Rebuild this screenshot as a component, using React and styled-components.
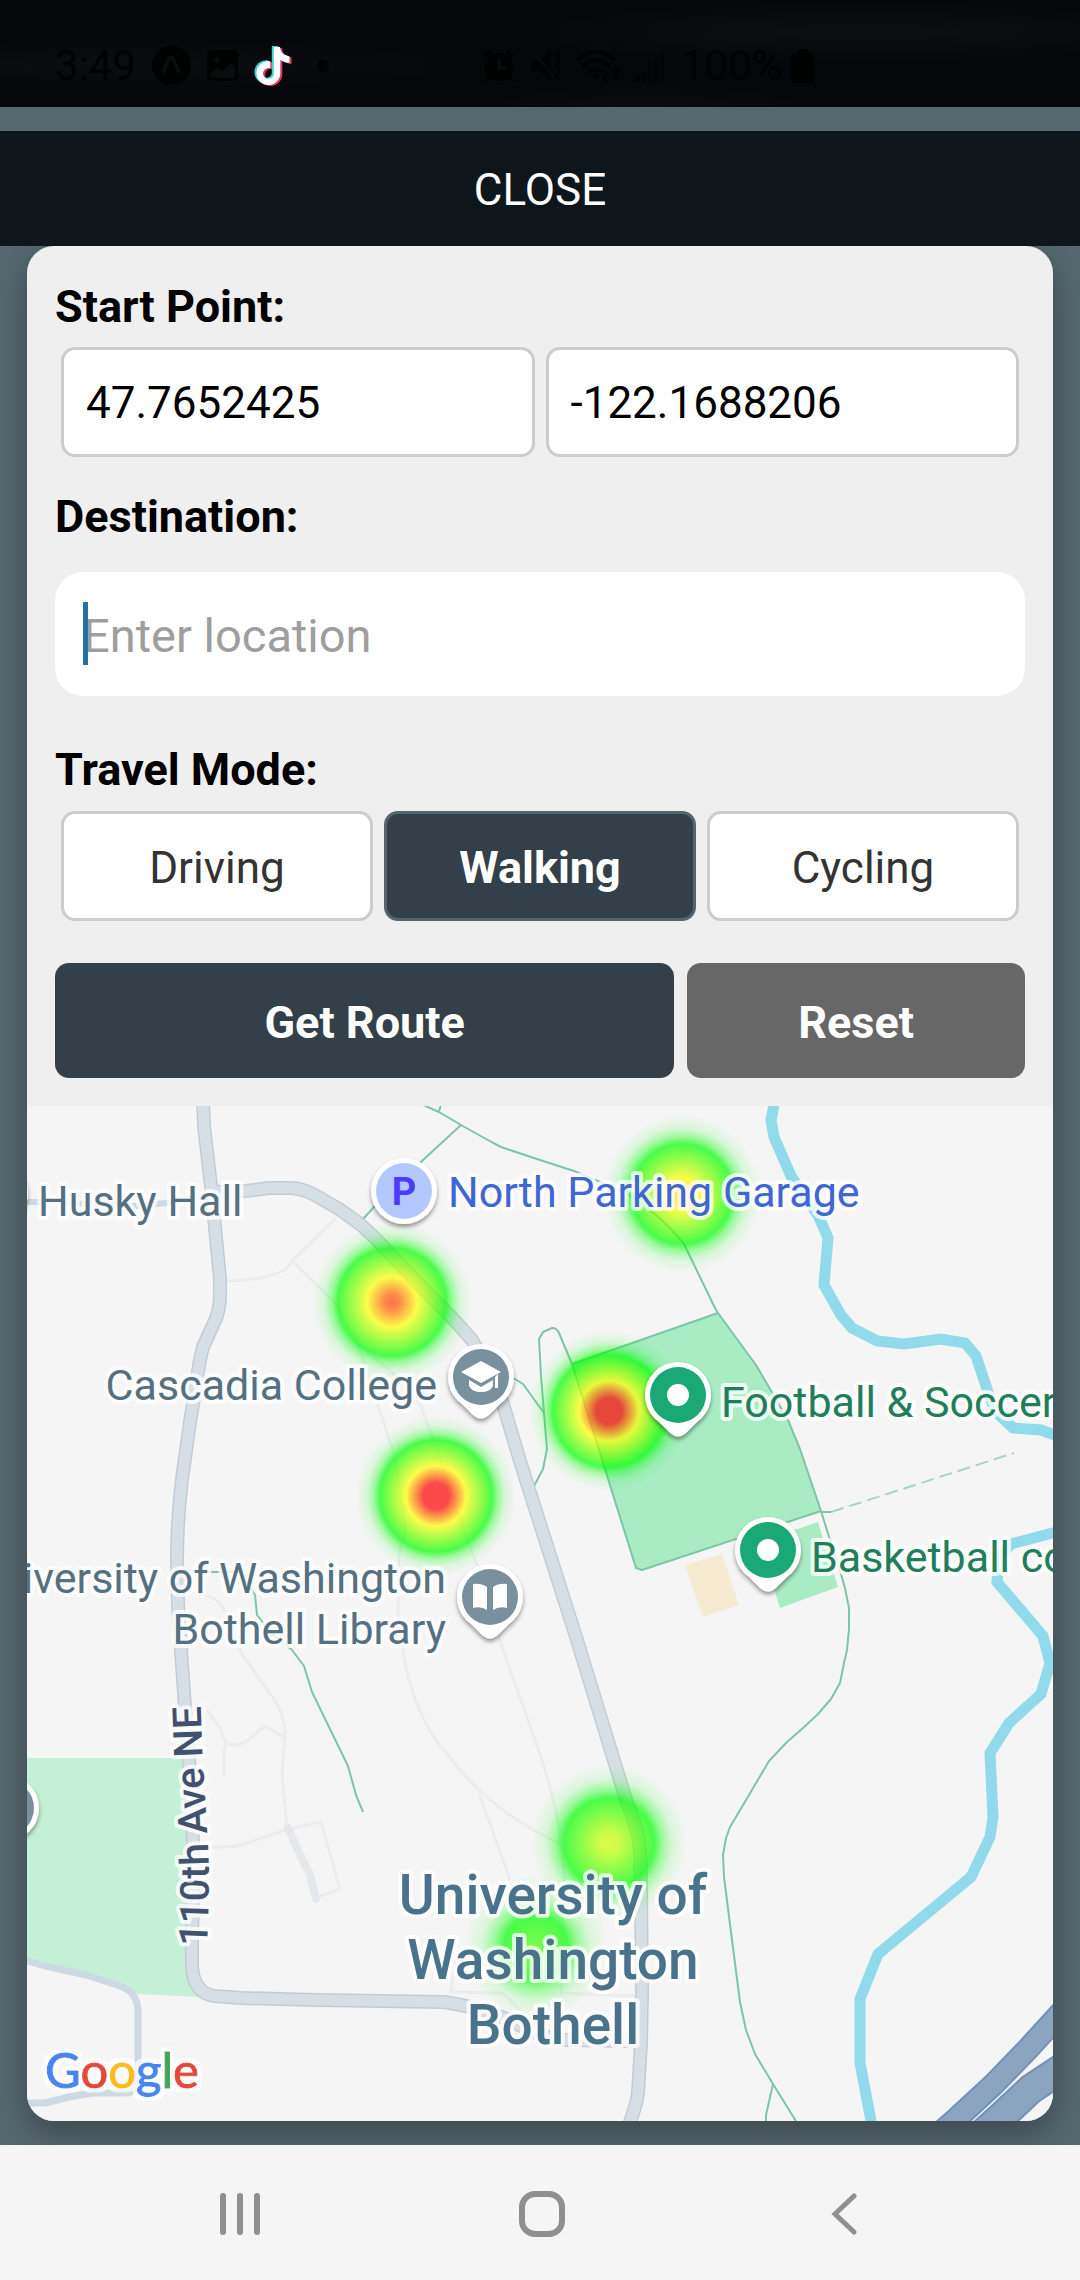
import React, { useState } from 'react'
import styled, { createGlobalStyle } from 'styled-components'
import { SiTiktok } from 'react-icons/si'

const GlobalStyle = createGlobalStyle`
  * {
    box-sizing: border-box;
  }
  body {
    margin: 0;
    background: #56676f;
    font-family: Roboto, 'Liberation Sans', sans-serif;
  }
  button, input {
    font-family: inherit;
  }
`

const Screen = styled.div`
  min-height: 100vh;
  display: flex;
  flex-direction: column;
  background: #56676f;
`

const StatusBar = styled.header`
  height: 107px;
  padding: 24px 55px 0;
  display: flex;
  align-items: center;
  background:
    radial-gradient(ellipse at 10% 60%, #0c0d0f, transparent 30%),
    radial-gradient(ellipse at 80% 30%, #0e0f12, transparent 30%),
    radial-gradient(ellipse at 60% 110%, #0d0e11, transparent 22%),
    #06070a;
  color: #010202;
  font-size: 42px;
`

const StatusGroup = styled.div`
  display: flex;
  align-items: center;
  gap: ${props => props.$gap}px;
  margin-left: ${props => props.$offset || 0}px;

  svg {
    display: block;
    flex: none;
  }
`

const Battery = styled.span`
  display: flex;
  align-items: center;
  gap: 8px;
`

const TikTok = styled(SiTiktok)`
  color: #ffffff;
  filter: drop-shadow(-2px -1px 0 #3fd5d8) drop-shadow(2px 1px 0 #e03a5c);
`

const CloseButton = styled.button`
  margin-top: 24px;
  height: 115px;
  width: 100%;
  padding: 3px 0 0;
  border: 0;
  background: #0e161b;
  color: #ffffff;
  font-size: 44px;
  text-transform: uppercase;
`

const Panel = styled.main`
  flex: 1;
  display: flex;
  flex-direction: column;
  margin: 0 27px 24px;
  border-radius: 27px;
  background: #efefef;
  overflow: hidden;
  box-shadow: 0 12px 32px rgba(0, 0, 0, 0.3);
  clip-path: inset(0 -27px -24px -27px);
`

const Form = styled.form`
  display: flex;
  flex-direction: column;
  padding: 34px 28px 28px;
`

const Label = styled.label`
  font-size: 45px;
  font-weight: bold;
  line-height: 53px;
  color: #000000;
  margin-bottom: ${props => props.$gap}px;
`

const Row = styled.div`
  display: flex;
  gap: 11px;
  padding: 0 6px;
  margin-bottom: ${props => props.$after}px;
`

const CoordInput = styled.input`
  flex: 1;
  min-width: 0;
  height: 110px;
  padding: 2px 22px 0;
  border: 3px solid #cccccc;
  border-radius: 14px;
  background: #ffffff;
  color: #000000;
  font-size: 44px;
`

const SearchBox = styled.div`
  position: relative;
  margin-bottom: 47px;
`

const SearchInput = styled.input`
  display: block;
  width: 100%;
  height: 124px;
  padding: 2px 28px 0;
  border: 0;
  border-radius: 28px;
  background: #ffffff;
  font-size: 47px;
  caret-color: #2471a3;

  &::placeholder {
    color: #9e9e9e;
    opacity: 1;
  }
`

const Caret = styled.span`
  position: absolute;
  left: 28px;
  top: 30px;
  width: 5px;
  height: 63px;
  background: #2471a3;
`

const ModeButton = styled.button`
  flex: 1;
  height: 110px;
  padding: 3px 0 0;
  border: 3px solid ${props => (props.$active ? '#54656e' : '#cccccc')};
  border-radius: 14px;
  background: ${props => (props.$active ? '#334049' : '#ffffff')};
  color: ${props => (props.$active ? '#ffffff' : '#333333')};
  font-size: ${props => (props.$active ? 45 : 44)}px;
  font-weight: ${props => (props.$active ? 'bold' : 'normal')};
`

const Actions = styled.div`
  display: grid;
  grid-template-columns: 11fr 6fr;
  gap: 13px;
`

const ActionButton = styled.button`
  height: 115px;
  padding: 3px 0 0;
  border: 0;
  border-radius: 14px;
  background: ${props => (props.$muted ? '#676767' : '#334049')};
  color: #ffffff;
  font-size: 45px;
  font-weight: bold;
`

const MapArea = styled.section`
  position: relative;
  flex: 1;
  min-height: 400px;
  background: #f6f5f6;
`

const MapSvg = styled.svg`
  position: absolute;
  inset: 0;
  width: 100%;
  height: 100%;
`

const MapLabel = styled.text`
  font-family: Roboto, 'Liberation Sans', sans-serif;
  font-size: ${props => props.$size || 43}px;
  font-weight: ${props => props.$weight || 400};
  fill: ${props => props.$color || '#557080'};
  stroke: #ffffff;
  stroke-opacity: 0.8;
  stroke-width: 8px;
  stroke-linejoin: round;
  paint-order: stroke;
`

const LogoText = styled.text`
  font-family: Lato, 'Open Sans', sans-serif;
  font-size: 49px;
  font-weight: 400;
  stroke-width: 1px;
`

const NavBar = styled.nav`
  height: 135px;
  display: flex;
  align-items: center;
  padding: 2px 85px 0 89px;
  background: #f5f5f5;
`

const NavButton = styled.button`
  flex: 1;
  display: flex;
  justify-content: center;
  padding: 0;
  border: 0;
  background: none;
`

const line = pts => 'M' + pts.join(' L')

const PATHS = {
  avenue: 'M203 1100 L204 1126 L211 1186 L220 1279 L220 1295 Q220 1312 213 1325 L203 1347 Q199 1362 196 1386 L190 1422 L182 1479 Q177 1520 177 1561 L178 1604 L181 1650 L185 1707 L190 1773 L193 1840 L193 1893 L192 1940 L192 1967 Q194 1993 214 1996 L241 1998 L317 2000 L444 2002 Q480 2007 516 2023 Q540 2038 566 2040 L634 2041',
  campusWay: 'M214 1192 L246 1191 L269 1188 L292 1188 Q303 1189 313 1194 L339 1209 L360 1224 L375 1238 L413 1278 L456 1322 L472 1340 Q490 1370 503 1404 L520 1461 L577 1640 L627 1803 Q639 1830 640 1850 L641 1887 L642 1993 L641 2043 L638 2093 Q637 2103 629 2125',
  hallRoad: 'M20 1202 L45 1202 L138 1206 L165 1203 L210 1195',
  loopRoad: 'M20 1959 L45 1966 L86 1975 L120 1986 Q137 1992 138 2010 L138 2073 Q138 2093 126 2093 L93 2093 L69 2097 L45 2103 L20 2103',
  river: line(['775 1100', '771 1120', '774 1137', '791 1176', '818 1215', '828 1238', '824 1285', '841 1315', '852 1328', '877 1341', '904 1344', '941 1339', '965 1343', '976 1356', '988 1392', '995 1411', '1013 1428', '1041 1430', '1060 1437']),
  riverSouth: line(['1060 1531', '1011 1544', '999 1558', '997 1582', '1043 1636', '1050 1663', '1041 1694', '1009 1723', '990 1753', '993 1817', '990 1837', '971 1877', '878 1954', '860 1999', '860 2063', '872 2126']),
  field: line(['718 1313', '756 1365', '773 1394', '788 1420', '800 1449', '821 1511', '642 1570', '636 1568', '572 1364']) + 'Z',
}

// thin green walking trails
const TRAILS = [
  'M421 1104 L439 1112 L461 1125 L486 1139 L501 1147 L540 1160 L574 1171 L624 1192 Q660 1214 684 1244 L715 1308 L718 1313',
  'M441 1104 L439 1112',
  'M461 1125 L422 1161 L374 1207 L362 1220',
  'M572 1364 L559 1333 Q557 1328 552 1328 L543 1332 L539 1339 L541 1376 L544 1413 L547 1449 L543 1469 L534 1486',
  'M505 1376 L515 1379 L523 1384 L544 1413',
  'M821 1511 L830 1540 L841 1574 L845 1588 L849 1608 L849 1629 L847 1650 L844 1663 L840 1683 L831 1699 L818 1714 L803 1728 L787 1742 L769 1761 L749 1795 L730 1827 L726 1838 L723 1855 L724 1877 L732 1940 L740 2002 L746 2030 L755 2054 L773 2084 L799 2126',
  'M773 2084 L766 2115 L766 2126',
  'M183 1570 L210 1572 L240 1572 L255 1595 L257 1615 L270 1632 L292 1650 L304 1666 L312 1692 L348 1766 L356 1795 L363 1812',
]

const FOOTPATHS = [
  'M227 1281 Q285 1279 292 1261 L336 1218',
  'M292 1261 L336 1304 L358 1344 L379 1408 L394 1454 L406 1529 L399 1554 L398 1615 L403 1650 Q413 1717 448 1755 Q490 1812 563 1845',
  'M358 1344 L396 1376 L420 1404 L441 1461 L461 1522 L477 1565 L503 1650 L534 1737 Q561 1810 564 1873 L561 1993 L636 1996',
  'M479 1793 L510 1880',
  'M455 1960 L451 1992 L503 1993 L520 2010',
  'M203 1595 Q222 1597 229 1622 Q236 1647 248 1663 L269 1692 Q285 1712 285 1735 L282 1775 L287 1827',
  'M207 1710 L220 1728 L226 1743 Q237 1748 248 1740 L265 1726 L285 1738',
  'M226 1743 L224 1750 L224 1778',
  'M212 1847 Q235 1848 250 1842 L288 1829 L321 1822 L340 1889 L318 1897',
]

const HIGHWAYS = [
  { d: 'M938 2135 L954 2121 L993 2085 L1027 2050 L1070 2003', width: 24 },
  { d: 'M979 2137 L1000 2118 L1031 2089 L1070 2063', width: 31 },
]

// each stop is [distance from the centre, rgb]
const HEAT = [
  { id: 'parking', x: 682, y: 1194, r: 79, stops: [[0, '255,190,0'], [16, '255,255,0'], [50, '0,255,0']] },
  { id: 'college', x: 392, y: 1302, r: 80, stops: [[0, '255,60,0'], [8, '255,95,0'], [25, '255,255,0'], [54, '0,255,0']] },
  { id: 'library', x: 436, y: 1496, r: 80, stops: [[0, '255,0,0'], [13, '255,0,0'], [30, '255,255,0'], [56, '0,255,0']] },
  { id: 'football', x: 609, y: 1411, r: 80, stops: [[0, '255,0,0'], [13, '255,0,0'], [30, '255,255,0'], [56, '0,255,0']] },
  { id: 'campus', x: 609, y: 1843, r: 78, stops: [[0, '205,255,0'], [10, '190,255,0'], [45, '0,255,0']] },
  { id: 'south', x: 536, y: 1947, r: 72, stops: [[0, '70,255,0'], [32, '0,255,0']] },
]

const Heat = ({ id, x, y, r, stops }) => {
  const edge = stops[stops.length - 1][0]
  return (
    <>
      <radialGradient id={`heat-${id}`}>
        {stops.map(([at, rgb]) => (
          <stop key={at} offset={at / r} stopColor={`rgb(${rgb})`} stopOpacity="0.7" />
        ))}
        <stop offset={(edge + (r - edge) * 0.25) / r} stopColor="rgb(0,255,0)" stopOpacity="0.36" />
        <stop offset={(edge + (r - edge) * 0.55) / r} stopColor="rgb(0,255,0)" stopOpacity="0.12" />
        <stop offset={1} stopColor="rgb(0,255,0)" stopOpacity="0" />
      </radialGradient>
      <circle cx={x} cy={y} r={r} fill={`url(#heat-${id})`} />
    </>
  )
}

const Pin = ({ x, y, color, round, children }) => (
  <g transform={`translate(${x} ${y})`}>
    <g filter="url(#pinShadow)" fill="#ffffff">
      <circle r="33" />
      {!round && <path d="M-27 19 L-8 38 Q0 45 8 38 L27 19 Z" />}
    </g>
    <circle r="28" fill={color} />
    {children}
  </g>
)

const CampusMap = () => (
  <MapSvg viewBox="27 1106 1026 1015" preserveAspectRatio="xMidYMid slice" role="img" aria-label="Campus map">
    <defs>
      <filter id="pinShadow" x="-30%" y="-30%" width="160%" height="160%">
        <feDropShadow dx="0" dy="3" stdDeviation="2" floodColor="#000000" floodOpacity="0.4" />
      </filter>
      <filter id="halo" x="-10%" y="-20%" width="120%" height="140%">
        <feMorphology in="SourceAlpha" operator="dilate" radius="4" result="grown" />
        <feFlood floodColor="#ffffff" floodOpacity="0.75" />
        <feComposite in2="grown" operator="in" result="white" />
        <feMerge>
          <feMergeNode in="white" />
          <feMergeNode in="SourceGraphic" />
        </feMerge>
      </filter>
      <path id="avenueLabel" d="M207 1947 Q210 1880 208 1845 L202 1745 L200 1690" />
    </defs>

    <path d="M20 1758 H190 L193 1850 L192 1967 L200 1997 L138 1994 L120 1986 L20 1960 Z" fill="#c3f0d6" />
    <path d={PATHS.field} fill="#a9ecc4" />
    <path d="M818 1522 L838 1587 L780 1608 L759 1542 Z" fill="#a9ecc4" />
    <path d="M685 1565 L722 1554 L739 1605 L703 1617 Z" fill="#f6ebd0" />

    <g fill="none" strokeLinejoin="round">
      <g stroke="#ececee" strokeWidth="3">
        {FOOTPATHS.map(d => <path key={d} d={d} />)}
      </g>
      <path d="M288 1828 L299 1853 L310 1875 L316 1899" stroke="#e4e7eb" strokeWidth="8" strokeLinecap="round" />
      <g stroke="#90daec" strokeWidth="11" strokeLinejoin="miter">
        <path d={PATHS.river} />
        <path d={PATHS.riverSouth} />
      </g>
      <g stroke="#7cc5a9" strokeWidth="2">
        {TRAILS.map(d => <path key={d} d={d} />)}
        <path d={PATHS.field} />
        <path d="M821 1512 H831" />
        <path d="M831 1512 L1014 1453" strokeDasharray="13 6" stroke="#a8d5c3" />
      </g>
      <path d={PATHS.hallRoad} stroke="#cdd9e3" strokeWidth="6" />
      <path d={PATHS.loopRoad} stroke="#cdd9e3" strokeWidth="7" />
      <g stroke="#c3ccd4" strokeWidth="14">
        <path d={PATHS.avenue} />
        <path d={PATHS.campusWay} />
      </g>
      <g stroke="#d7dfe6" strokeWidth="11">
        <path d={PATHS.avenue} />
        <path d={PATHS.campusWay} />
      </g>
      {HIGHWAYS.map(({ d, width }) => (
        <g key={d}>
          <path d={d} stroke="#7291b4" strokeWidth={width} />
          <path d={d} stroke="#8ba4c0" strokeWidth={width - 4} />
        </g>
      ))}
    </g>

    {HEAT.map(spot => <Heat key={spot.id} {...spot} />)}

    <Pin x={-5} y={1193} color="#7a909d" round />
    <Pin x={6} y={1808} color="#7a909d" round />
    <Pin x={404} y={1191} color="#b2c8ff" round>
      <text y="14" textAnchor="middle" fontFamily="Roboto, sans-serif" fontSize="38" fontWeight="700" fill="#4b3bff">P</text>
    </Pin>
    <Pin x={481} y={1377} color="#7a909d">
      <path d="M0 -16 L20 -5 L0 6 L-20 -5 Z M14 0 V11 H17 V-3 Z" fill="#ffffff" />
      <path d="M-12 3 L0 10 L12 3 V9 Q9 15 0 15 Q-9 15 -12 9 Z" fill="#ffffff" />
    </Pin>
    <Pin x={490} y={1597} color="#7a909d">
      <path d="M-17 -13 Q-9 -14 -3 -10 V13 Q-9 9 -17 11 Z M17 -13 Q9 -14 3 -10 V13 Q9 9 17 11 Z" fill="#ffffff" />
    </Pin>
    <Pin x={678} y={1395} color="#1aa876">
      <circle r="11" fill="#ffffff" />
    </Pin>
    <Pin x={768} y={1550} color="#1aa876">
      <circle r="11" fill="#ffffff" />
    </Pin>

    <MapLabel x="38" y="1216">Husky Hall</MapLabel>
    <MapLabel x="448" y="1207" $color="#3f66d6">North Parking Garage</MapLabel>
    <MapLabel x="437" y="1400" textAnchor="end">Cascadia College</MapLabel>
    <MapLabel x="446" y="1593" textAnchor="end">University of Washington</MapLabel>
    <MapLabel x="446" y="1644" textAnchor="end">Bothell Library</MapLabel>
    <MapLabel x="721" y="1417" $color="#1f7f5a">Football &amp; Soccer Field</MapLabel>
    <MapLabel x="811" y="1572" $color="#1f7f5a">Basketball court</MapLabel>
    <MapLabel $size={40} $weight={500} $color="#42526e">
      <textPath href="#avenueLabel">110th Ave NE</textPath>
    </MapLabel>
    <MapLabel y="1914" textAnchor="middle" $size={55} $weight={500} $color="#48738a">
      <tspan x="553">University of</tspan>
      <tspan x="553" dy="65">Washington</tspan>
      <tspan x="553" dy="65">Bothell</tspan>
    </MapLabel>

    <g filter="url(#halo)">
      <LogoText x="45" y="2088">
        <tspan fill="#4586f0" stroke="#4586f0">G</tspan>
        <tspan fill="#e2483a" stroke="#e2483a">o</tspan>
        <tspan fill="#f8bd16" stroke="#f8bd16">o</tspan>
        <tspan fill="#4586f0" stroke="#4586f0">g</tspan>
        <tspan fill="#3fa757" stroke="#3fa757">l</tspan>
        <tspan fill="#e2483a" stroke="#e2483a">e</tspan>
      </LogoText>
    </g>
  </MapSvg>
)

const Status = () => (
  <StatusBar>
    <StatusGroup $gap={16}>
      <span>3:49</span>
      <svg width="39" height="39" viewBox="0 0 40 40">
        <circle cx="20" cy="20" r="20" fill="currentColor" />
        <path d="M11 28 L18 12 H21 L28 28" fill="none" stroke="#0c0d10" strokeWidth="4" />
      </svg>
      <svg width="31" height="31" viewBox="0 0 31 31">
        <rect width="31" height="31" rx="5" fill="currentColor" />
        <circle cx="10" cy="10" r="3" fill="#0b0c0f" />
        <path d="M3 24 L11 17 L16 21 L24 13 L28 17 V26 Q28 28 26 28 H5 Q3 28 3 26 Z" fill="#0b0c0f" />
      </svg>
      <TikTok size={38} />
    </StatusGroup>
    <StatusGroup $gap={16} $offset={25}>
      <svg width="12" height="12" viewBox="0 0 12 12">
        <circle cx="6" cy="6" r="6" fill="currentColor" />
      </svg>
    </StatusGroup>
    <StatusGroup $gap={15} $offset={154}>
      <svg width="32" height="32" viewBox="0 0 32 32">
        <circle cx="16" cy="17" r="14" fill="currentColor" />
        <path d="M2 6 L7 2 M30 6 L25 2 M6 28 L3 31 M26 28 L29 31" stroke="currentColor" strokeWidth="4" strokeLinecap="round" />
        <path d="M16 9 V18 H23" fill="none" stroke="#0b0c0f" strokeWidth="3" />
      </svg>
      <svg width="32" height="32" viewBox="0 0 32 32">
        <path d="M1 11 H9 L21 1 V31 L9 21 H1 Z" fill="currentColor" />
        <path d="M3 2 L22 24" stroke="#08090c" strokeWidth="3" />
        <path d="M30 2 L26 6 L30 11 L26 16 L30 21 L26 26 L30 30" fill="none" stroke="currentColor" strokeWidth="3" />
      </svg>
      <svg width="44" height="34" viewBox="0 0 44 34">
        <g fill="none" stroke="currentColor" strokeWidth="4" strokeLinecap="round">
          <path d="M2 10 Q19 -5 36 10" />
          <path d="M7 17 Q19 6 31 17" />
          <path d="M13 23 Q19 17 25 23" />
        </g>
        <circle cx="19" cy="27" r="3" fill="currentColor" />
        <path d="M29 21 V31 L25 27 M29 31 L33 27 M39 31 V20 L35 24 M39 20 L43 24" fill="none" stroke="currentColor" strokeWidth="3" />
      </svg>
      <svg width="30" height="32" viewBox="0 0 30 32" fill="currentColor">
        <rect x="0" y="25" width="4" height="7" />
        <g opacity="0.5">
          <rect x="6" y="19" width="4" height="13" />
          <rect x="12" y="13" width="4" height="19" />
          <rect x="18" y="7" width="4" height="25" />
          <rect x="25" y="1" width="4" height="31" />
        </g>
      </svg>
      <Battery>
        <span>100%</span>
        <svg width="23" height="34" viewBox="0 0 23 34" fill="currentColor">
          <rect x="6" y="0" width="11" height="8" rx="2" />
          <rect x="0" y="4" width="23" height="30" rx="4" />
        </svg>
      </Battery>
    </StatusGroup>
  </StatusBar>
)

const MODES = ['Driving', 'Walking', 'Cycling']

const App = () => {
  const [mode, setMode] = useState('Walking')
  const [destination, setDestination] = useState('')

  return (
    <Screen>
      <GlobalStyle />
      <Status />
      <CloseButton type="button">Close</CloseButton>
      <Panel>
        <Form onSubmit={e => e.preventDefault()}>
          <Label htmlFor="startLat" $gap={14}>Start Point:</Label>
          <Row $after={33}>
            <CoordInput id="startLat" type="text" defaultValue="47.7652425" />
            <CoordInput type="text" aria-label="Start longitude" defaultValue="-122.1688206" />
          </Row>
          <Label htmlFor="destination" $gap={29}>Destination:</Label>
          <SearchBox>
            <SearchInput
              id="destination"
              type="text"
              placeholder="Enter location"
              value={destination}
              onChange={e => setDestination(e.target.value)}
            />
            {!destination && <Caret />}
          </SearchBox>
          <Label as="div" id="modeLabel" $gap={15}>Travel Mode:</Label>
          <Row role="group" aria-labelledby="modeLabel" $after={42}>
            {MODES.map(name => (
              <ModeButton
                key={name}
                type="button"
                $active={name === mode}
                aria-pressed={name === mode}
                onClick={() => setMode(name)}
              >
                {name}
              </ModeButton>
            ))}
          </Row>
          <Actions>
            <ActionButton type="submit">Get Route</ActionButton>
            <ActionButton type="button" $muted onClick={() => setDestination('')}>Reset</ActionButton>
          </Actions>
        </Form>
        <MapArea>
          <CampusMap />
        </MapArea>
      </Panel>
      <NavBar>
        <NavButton type="button" aria-label="Recent apps">
          <svg width="40" height="42" viewBox="0 0 40 42" fill="#8f8f8f">
            <rect x="0" width="6" height="42" rx="3" />
            <rect x="17" width="6" height="42" rx="3" />
            <rect x="34" width="6" height="42" rx="3" />
          </svg>
        </NavButton>
        <NavButton type="button" aria-label="Home">
          <svg width="46" height="46" viewBox="0 0 46 46">
            <rect x="3" y="3" width="40" height="40" rx="13" fill="none" stroke="#8f8f8f" strokeWidth="6" />
          </svg>
        </NavButton>
        <NavButton type="button" aria-label="Back">
          <svg width="26" height="42" viewBox="0 0 26 42">
            <path d="M23 3 L4 21 L23 39" fill="none" stroke="#8f8f8f" strokeWidth="5" strokeLinecap="round" />
          </svg>
        </NavButton>
      </NavBar>
    </Screen>
  )
}

export default App
